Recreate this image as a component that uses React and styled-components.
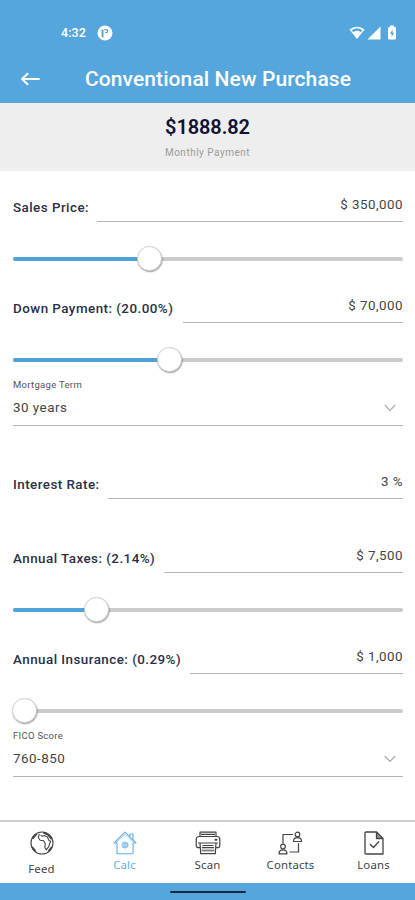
import React from "react";
import styled, { createGlobalStyle } from "styled-components";

const Global = createGlobalStyle`
  * { box-sizing: border-box; }
  body { margin: 0; background: #fff; font-family: Roboto, "Liberation Sans", sans-serif; }
`;

const Screen = styled.div`
  width: 415px;
  height: 900px;
  display: flex;
  flex-direction: column;
  background: #fff;
  overflow: hidden;
`;

const Top = styled.header`
  height: 103px;
  flex: none;
  background: #55a6dd;
  color: #fff;
`;

const StatusBar = styled.div`
  height: 55px;
  padding: 10px 18px 0 61px;
  display: flex;
  align-items: center;
  justify-content: space-between;
`;

const StatusGroup = styled.div`
  display: flex;
  align-items: center;
  height: 24px;
  gap: ${(p) => p.$gap}px;
  svg { display: block; }
  svg:nth-child(3) { margin-left: 4px; }
`;

const Clock = styled.span`
  font-size: 12.5px;
  font-weight: 500;
  letter-spacing: 0.1px;
`;

const TitleBar = styled.div`
  height: 47px;
  padding: 0 63px 0 20px;
  display: flex;
  align-items: center;
  svg { display: block; flex: none; }
`;

const Title = styled.h1`
  margin: 0;
  flex: 1;
  text-align: center;
  white-space: nowrap;
  font-size: 21px;
  font-weight: 500;
  line-height: 26px;
  padding-left: 43px;
  letter-spacing: 0.1px;
`;

const Summary = styled.section`
  height: 68px;
  flex: none;
  background: #eee;
  display: flex;
  flex-direction: column;
  align-items: center;
  padding-top: 11px;
`;

const Amount = styled.div`
  font-size: 20px;
  line-height: 26px;
  font-weight: 600;
  color: #101333;
  letter-spacing: -0.1px;
`;

const Caption = styled.div`
  margin-top: 6px;
  font-size: 10px;
  line-height: 13px;
  color: #9b9b9b;
  letter-spacing: 0.5px;
`;

const Form = styled.main`
  flex: 1;
  padding: 19px 12px 0 13px;
`;

const Field = styled.div`
  display: flex;
  height: 32px;
  margin-top: ${(p) => p.$gap || 0}px;
`;

const Label = styled.label`
  font-size: 13.4px;
  line-height: 16px;
  padding-top: 9.5px;
  font-weight: 500;
  color: #2b2f45;
  white-space: nowrap;
  letter-spacing: 0.46px;
  width: ${(p) => p.$width}px;
`;

const Value = styled.div`
  flex: 1;
  border-bottom: 1px solid #b5b5b5;
  text-align: right;
  font-size: 13.4px;
  line-height: 16px;
  padding-top: 6.5px;
  color: #444;
  letter-spacing: 0.45px;
`;

const Slider = styled.div`
  position: relative;
  height: 25px;
  margin-top: 24px;
  display: flex;
  align-items: center;
`;

const Track = styled.div`
  width: 100%;
  height: 4px;
  border-radius: 2px;
  background: #cbcbcb;
  overflow: hidden;
`;

const Fill = styled.div`
  width: ${(p) => p.$at}px;
  height: 100%;
  background: #4fa2da;
`;

const Knob = styled.div`
  position: absolute;
  top: 0;
  left: ${(p) => p.$at - 12.5}px;
  width: 25px;
  height: 25px;
  border-radius: 50%;
  background: #fff;
  border: 1px solid #d2d2d2;
  box-shadow: 0.5px 1px 1.5px rgba(0, 0, 0, 0.4);
`;

const SelectBox = styled.div`
  height: 53px;
  margin: 1px 0 41px;
  border-bottom: 1px solid #b5b5b5;
  padding-top: 5px;
`;

const SelectLabel = styled.div`
  font-size: 9.5px;
  line-height: 13px;
  color: #555;
  letter-spacing: 0.3px;
`;

const SelectValue = styled.div`
  display: flex;
  align-items: center;
  justify-content: space-between;
  margin-top: 8px;
  height: 17px;
  padding-right: 7px;
  font-size: 13.4px;
  line-height: 17px;
  color: #444;
  letter-spacing: 0.5px;
`;

const Tabs = styled.nav`
  flex: none;
  height: 63px;
  border-top: 2px solid #cfcfcf;
  display: grid;
  grid-template-columns: repeat(5, 1fr);
  background: #fff;
`;

const Tab = styled.div`
  display: flex;
  flex-direction: column;
  align-items: center;
  padding-top: 9px;
  color: ${(p) => (p.$active ? "#63b0e4" : "#444")};
  svg { display: block; height: 24px; }
`;

const TabText = styled.span`
  margin-top: ${(p) => (p.$low ? 6 : 2)}px;
  font-family: "Noto Sans", sans-serif;
  font-size: 11.4px;
  line-height: 15px;
  letter-spacing: 0.15px;
`;

const HomeBar = styled.footer`
  flex: none;
  height: 17px;
  background: #55a6dd;
  display: flex;
  justify-content: center;
  padding-top: 8px;
`;

const HomePill = styled.div`
  width: 76px;
  height: 2px;
  border-radius: 1px;
  background: #18283a;
`;

const line = { fill: "none", stroke: "currentColor", strokeLinecap: "round", strokeLinejoin: "round" };

const AppBadge = () => (
  <svg width="16" height="16" viewBox="0 0 16 16">
    <circle cx="8" cy="8" r="7.5" fill="#fff" />
    <path d="M4.500 4.500h2v8H6c-1 0-1.500-.7-1.500-1.700z" fill="#55a6dd" />
    <path d="M7.300 4.700h1.900a1.500 1.500 0 0 1 0 3H8.300" fill="none" stroke="#55a6dd" strokeWidth="1.300" />
  </svg>
);

const WifiIcon = () => (
  <svg width="16" height="15" viewBox="0 0 16 15">
    <path d="M.4 4.500a11.500 11.500 0 0 1 15.200 0L8 14z" fill="#fff" />
    <path d="M2.700 5.300a9 9 0 0 1 10.600 0L11.800 7.200a6.400 6.400 0 0 0-7.600 0z" fill="#55a6dd" />
  </svg>
);

const SignalIcon = () => (
  <svg width="14" height="14" viewBox="0 0 14 14">
    <path d="M13.500 .5v13H.5z" fill="#fff" />
  </svg>
);

const BatteryIcon = () => (
  <svg width="10" height="15" viewBox="0 0 10 15">
    <path d="M3 .5h4v1.500h1a1 1 0 0 1 1 1v10.500a1 1 0 0 1-1 1H2a1 1 0 0 1-1-1V3a1 1 0 0 1 1-1h1z" fill="#fff" />
    <path d="M5.600 4.500 3 8.700h1.600v3.300L7.100 7.700H5.600z" fill="#55a6dd" />
  </svg>
);

const BackIcon = () => (
  <svg width="21" height="16" viewBox="0 0 21 16" {...line} strokeWidth="1.900">
    <path d="M19 8H2M7.500 2.800 2 8l5.500 5.200" />
  </svg>
);

const Chevron = () => (
  <svg width="12" height="8" viewBox="0 0 12 8" fill="none" stroke="#aaa" strokeWidth="1.200">
    <path d="M.8 1 6 6.400 11.200 1" />
  </svg>
);

const GlobeIcon = () => (
  <svg width="24" height="24" viewBox="0 0 24 24" {...line} strokeWidth="1.100">
    <circle cx="12" cy="12" r="11" />
    <path d="M9.300 3.200 8.300 6.500l1.800 2.800 3.600.5 1.600 3.200-.5 3.300 1.500 2.400 2.500-3 .7-2.700 1.300-2.800-1.800-.8-1.600-3.500-3.100-1.300-1.800.6-1.500-.8" />
    <path d="M14 1.800l4 1.800 3.300 4M3 7.200 6.500 3M21.500 16.500l-2.500 3M2.500 16.500 5 19.500" strokeWidth="1.900" />
  </svg>
);

const HouseIcon = () => (
  <svg width="24" height="24" viewBox="0 0 24 24" {...line} strokeWidth="1.100">
    <path d="M1 12 12 1.200 23 12H20v10.800H4V12zM17 6V3h3v6" />
    <path d="M3.500 11.500 12 3.300l8.500 8.200" strokeWidth=".6" />
    <circle cx="12" cy="14" r="3.100" fill="currentColor" fillOpacity=".35" strokeWidth=".7" />
    <path d="M13.300 12.500c-2.800-1-3 1-1.300 1.500s1.500 2.300-1.300 1.500" strokeWidth=".9" />
  </svg>
);

const PrinterIcon = () => (
  <svg width="26" height="24" viewBox="0 0 26 24" {...line} strokeWidth="1.200">
    <path d="M5 5.500V1.200h16v4.300M6.500 3.400h13M4 5.500h18c1.800 0 2.800 1.200 2.800 3v5.700c0 1.500-.8 2.500-2.300 2.500H21M5 16.700H3.500c-1.500 0-2.300-1-2.300-2.500V8.500c0-1.800 1-3 2.800-3" />
    <path d="M3.500 12h19M5 12h16L20.300 22.700H5.700zM8 14.500h10M7.500 16.700h11" />
    <path d="M7.500 19.500h11" strokeWidth="2" strokeOpacity=".65" />
    <path d="M20.500 8.800h1" strokeWidth="2" />
  </svg>
);

const ContactsIcon = () => (
  <svg width="25" height="24" viewBox="0 0 25 24" {...line} strokeWidth="1.200">
    <path d="M5 12V3.500h9.500M20.500 12.500V21H12M20.500 20v1" />
    <circle cx="19.500" cy="3.500" r="2.300" />
    <path d="M15.500 10.500c0-2.800 1.600-3.800 4-3.800s4 1 4 3.800z" />
    <circle cx="5" cy="15.500" r="2.300" />
    <path d="M1 22.800c0-3 1.600-4 4-4s4 1 4 4z" />
  </svg>
);

const LoanIcon = () => (
  <svg width="20" height="24" viewBox="0 0 20 24" {...line} strokeWidth="1.300">
    <path d="M2 1h10.500L19 7.500V23H2.200Q1 23 1 22V2Q1 1 2 1zM12.500 1.200V7.500H19" />
    <path d="M13 2v5h5z" fill="currentColor" fillOpacity=".55" stroke="none" />
    <path d="m6.300 13.500 3.200 3 5.200-5.800" />
  </svg>
);

const tabs = [
  { name: "Feed", Icon: GlobeIcon, low: true },
  { name: "Calc", Icon: HouseIcon, active: true },
  { name: "Scan", Icon: PrinterIcon },
  { name: "Contacts", Icon: ContactsIcon },
  { name: "Loans", Icon: LoanIcon },
];

function InputRow({ label, width, value, gap }) {
  return (
    <Field $gap={gap}>
      <Label $width={width}>{label}</Label>
      <Value>{value}</Value>
    </Field>
  );
}

function Range({ at }) {
  return (
    <Slider>
      <Track><Fill $at={at} /></Track>
      <Knob $at={at} />
    </Slider>
  );
}

function Select({ label, value }) {
  return (
    <SelectBox>
      <SelectLabel>{label}</SelectLabel>
      <SelectValue>{value}<Chevron /></SelectValue>
    </SelectBox>
  );
}

export default function App() {
  return (
    <Screen>
      <Global />
      <Top>
        <StatusBar>
          <StatusGroup $gap={11}><Clock>4:32</Clock><AppBadge /></StatusGroup>
          <StatusGroup $gap={2}><WifiIcon /><SignalIcon /><BatteryIcon /></StatusGroup>
        </StatusBar>
        <TitleBar><BackIcon /><Title>Conventional New Purchase</Title></TitleBar>
      </Top>
      <Summary>
        <Amount>$1888.82</Amount>
        <Caption>Monthly Payment</Caption>
      </Summary>
      <Form>
        <InputRow label="Sales Price:" width={84} value="$ 350,000" />
        <Range at={136.5} />
        <InputRow label="Down Payment: (20.00%)" width={170} value="$ 70,000" gap={20} />
        <Range at={156} />
        <Select label="Mortgage Term" value="30 years" />
        <InputRow label="Interest Rate:" width={95} value="3 %" />
        <InputRow label="Annual Taxes: (2.14%)" width={151} value="$ 7,500" gap={42} />
        <Range at={83.5} />
        <InputRow label="Annual Insurance: (0.29%)" width={177} value="$ 1,000" gap={20} />
        <Range at={11.5} />
        <Select label="FICO Score" value="760-850" />
      </Form>
      <Tabs>
        {tabs.map(({ name, Icon, active, low }) => (
          <Tab key={name} $active={active}>
            <Icon />
            <TabText $low={low}>{name}</TabText>
          </Tab>
        ))}
      </Tabs>
      <HomeBar><HomePill /></HomeBar>
    </Screen>
  );
}
